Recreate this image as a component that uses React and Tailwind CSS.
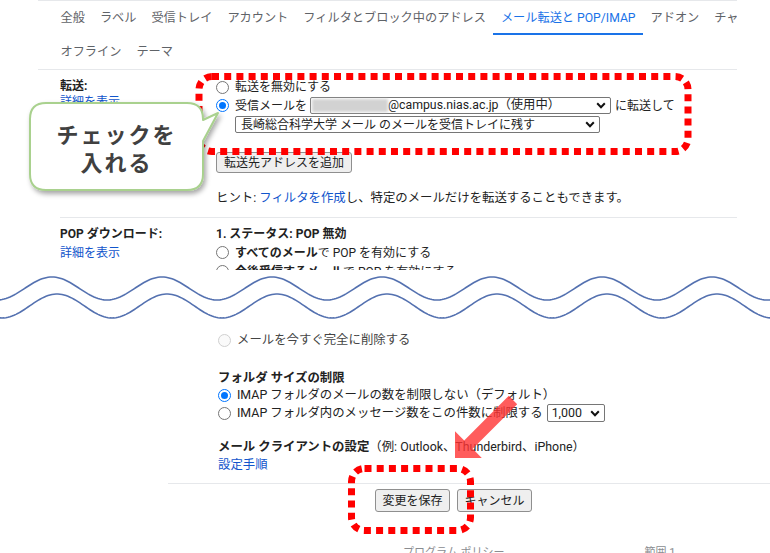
import React from "react";

const Radio = ({ checked, disabled }) => {
  if (checked) {
    return (
      <span className="w-[13px] h-[13px] shrink-0 rounded-full border-[1.5px] border-[#0075ff] bg-white flex items-center justify-center">
        <span className="w-[7px] h-[7px] rounded-full bg-[#0075ff]" />
      </span>
    );
  }
  return (
    <span
      className={
        disabled
          ? "w-[13px] h-[13px] shrink-0 rounded-full border border-[#d0d0d0] bg-[#fafafa]"
          : "w-[13px] h-[13px] shrink-0 rounded-full border border-[#767676] bg-white"
      }
    />
  );
};

const Chevron = () => (
  <svg width="10" height="7" viewBox="0 0 10 7" className="shrink-0">
    <path d="M1.2 1.3 L5 5.2 L8.8 1.3" fill="none" stroke="#111" strokeWidth="2" />
  </svg>
);

const wave = (cy, amp, phase) => {
  let d = "";
  for (let x = -4; x <= 774; x += 2) {
    const y = cy - amp * Math.cos((2 * Math.PI * (x - phase)) / 110);
    d += (x === -4 ? "M" : "L") + x + " " + y.toFixed(2) + " ";
  }
  return d;
};

const tabs = [
  "全般",
  "ラベル",
  "受信トレイ",
  "アカウント",
  "フィルタとブロック中のアドレス",
  "メール転送と POP/IMAP",
  "アドオン",
  "チャットと Meet",
];

export default function App() {
  const upper = wave(26.5, 11.5, 52);
  const lower = wave(44, 12, 57);

  return (
    <div className="relative w-[770px] h-[553px] overflow-hidden bg-white text-[#222] text-[12px] font-[family-name:Roboto,'Noto_Sans_CJK_JP',sans-serif]">
      {/* tabs */}
      <div className="ml-[38px] w-[699px] border-y border-[#e6e8eb] text-[12.2px] text-[#5f6368]">
        <div className="h-[34px] flex pl-[15px] overflow-hidden whitespace-nowrap">
          {tabs.map((t, i) => (
            <div
              key={t}
              className={
                i === 5
                  ? "relative shrink-0 px-[7.5px] flex items-center text-[#1a73e8]"
                  : "relative shrink-0 px-[7.5px] flex items-center"
              }
            >
              {t}
              {i === 5 && (
                <span className="absolute left-0 right-0 bottom-0 h-[2.5px] bg-[#1a73e8]" />
              )}
            </div>
          ))}
        </div>
        <div className="h-[34px] flex pl-[15px] whitespace-nowrap">
          <div className="px-[7.5px] flex items-center">オフライン</div>
          <div className="px-[7.5px] flex items-center">テーマ</div>
        </div>
      </div>

      {/* 転送 */}
      <div className="ml-[60px] w-[677px] h-[148px] border-b border-[#e6e8eb] flex">
        <div className="w-[156px] pt-[8px] leading-[16px]">
          <div className="font-bold">転送:</div>
          <div className="text-[#1155cc]">詳細を表示</div>
        </div>
        <div className="flex-1 pt-[8px]">
          <div className="h-[18px] flex items-center">
            <Radio />
            <span className="ml-[6px]">転送を無効にする</span>
          </div>
          <div className="h-[19px] flex items-center whitespace-nowrap">
            <Radio checked />
            <span className="ml-[6px]">受信メールを</span>
            <div className="ml-[3px] w-[301px] h-[17px] border border-[#767676] rounded-[2px] bg-white flex items-center pr-[4px] text-[12.3px]">
              <div className="ml-[1px] w-[76px] h-[13px] bg-[#d2d2d2] blur-[1.5px]" />
              <span>@campus.nias.ac.jp（使用中）</span>
              <span className="ml-auto">
                <Chevron />
              </span>
            </div>
            <span className="ml-[4px]">に転送して</span>
          </div>
          <div className="mt-[1px] pl-[19px]">
            <div className="w-[365px] h-[17px] border border-[#767676] rounded-[2px] bg-white flex items-center pl-[5px] pr-[4px] text-[12px] whitespace-nowrap">
              <span>長崎総合科学大学 メール のメールを受信トレイに残す</span>
              <span className="ml-auto">
                <Chevron />
              </span>
            </div>
          </div>
          <div className="mt-[19px] h-[21px] w-[136px] border border-[#8f8f8f] rounded-[3px] bg-[#efefef] flex items-center justify-center">
            転送先アドレスを追加
          </div>
          <div className="mt-[17px] h-[16px] flex items-center whitespace-nowrap text-[12.4px]">
            ヒント:&nbsp;<span className="text-[#1155cc]">フィルタを作成</span>し、特定のメールだけを転送することもできます。
          </div>
        </div>
      </div>

      {/* POP */}
      <div className="ml-[60px] w-[677px] h-[52px] overflow-hidden flex pt-[6px]">
        <div className="w-[156px]">
          <div className="h-[19px] flex items-center font-bold">POP ダウンロード:</div>
          <div className="h-[19px] flex items-center text-[#1155cc]">詳細を表示</div>
        </div>
        <div className="flex-1">
          <div className="h-[19px] flex items-center font-bold">1. ステータス: POP 無効</div>
          <div className="h-[19px] flex items-center">
            <Radio />
            <span className="ml-[6px]">
              <b>すべてのメール</b>で POP を有効にする
            </span>
          </div>
          <div className="h-[19px] flex items-center">
            <Radio />
            <span className="ml-[6px]">
              <b>今後受信するメール</b>で POP を有効にする
            </span>
          </div>
        </div>
      </div>

      {/* IMAP bottom */}
      <div className="mt-[61px] pl-[218px] text-[12.4px] whitespace-nowrap">
        <div className="h-[18px] flex items-center">
          <Radio disabled />
          <span className="ml-[6px] text-[#444]">メールを今すぐ完全に削除する</span>
        </div>
        <div className="mt-[20px] h-[18px] flex items-center font-bold">フォルダ サイズの制限</div>
        <div className="h-[17px] flex items-center">
          <Radio checked />
          <span className="ml-[6px]">IMAP フォルダのメールの数を制限しない（デフォルト）</span>
        </div>
        <div className="h-[18px] flex items-center">
          <Radio />
          <span className="ml-[6px]">IMAP フォルダ内のメッセージ数をこの件数に制限する</span>
          <div className="ml-[4px] w-[58px] h-[18px] border border-[#767676] rounded-[2px] bg-white flex items-center pl-[4px] pr-[4px]">
            <span>1,000</span>
            <span className="ml-auto">
              <Chevron />
            </span>
          </div>
        </div>
        <div className="mt-[16px] h-[18px] flex items-center">
          <b>メール クライアントの設定</b>
          <span>（例: Outlook、Thunderbird、iPhone）</span>
        </div>
        <div className="h-[18px] flex items-center text-[#1155cc]">設定手順</div>
      </div>
      <div className="mt-[9px] ml-[168px] border-t border-[#e6e8eb]" />
      <div className="pt-[5px] pl-[375px] flex gap-[7px]">
        <div className="h-[23px] w-[75px] border border-[#8f8f8f] rounded-[3px] bg-[#efefef] flex items-center justify-center">
          変更を保存
        </div>
        <div className="h-[23px] w-[75px] border border-[#8f8f8f] rounded-[3px] bg-[#efefef] flex items-center justify-center">
          キャンセル
        </div>
      </div>
      <div className="mt-[33px] flex text-[11px] text-[#8a8d91] whitespace-nowrap">
        <span className="ml-[403px]">プログラム ポリシー</span>
        <span className="ml-[140px]">範囲 1</span>
      </div>

      {/* wave break */}
      <svg className="absolute left-0 top-[262px] overflow-visible" width="770" height="70">
        <path d={upper + " L774 68 L-4 68 Z"} fill="#fff" />
        <path d={upper} fill="none" stroke="#5471b0" strokeWidth="1.6" />
        <path d={lower} fill="none" stroke="#5471b0" strokeWidth="1.6" />
      </svg>

      {/* annotations */}
      <svg className="absolute left-0 top-0 pointer-events-none" width="770" height="553">
        <rect x="199" y="76.5" width="489" height="75" rx="13" fill="none" stroke="#ff0000" strokeWidth="7" strokeDasharray="7 5.2" />
        <rect x="351.5" y="468.5" width="119" height="62" rx="13" fill="none" stroke="#ff0000" strokeWidth="7" strokeDasharray="7 5.2" />
        <polygon
          points="508.8,395.8 517.2,404.2 472.7,448.8 481.8,458 455,458 455,431.2 464.2,440.4"
          fill="#ff3333"
          opacity="0.8"
        />
        <defs>
          <filter id="sh" x="-20%" y="-20%" width="140%" height="150%">
            <feDropShadow dx="2" dy="3" stdDeviation="2.5" floodColor="#000" floodOpacity="0.35" />
          </filter>
        </defs>
        <path
          d="M46 103 H187 Q203 103 203 119 V120 L218 113 L203 141 V174 Q203 190 187 190 H46 Q30 190 30 174 V119 Q30 103 46 103 Z"
          fill="#ffffff"
          stroke="#a9d18e"
          strokeWidth="2"
          strokeLinejoin="round"
          filter="url(#sh)"
        />
      </svg>
      <div className="absolute left-[30px] top-[104px] w-[173px] h-[86px] flex flex-col items-center justify-center text-[22px] leading-[28px] font-bold tracking-[2px] text-[#404040] font-[family-name:'Noto_Sans_CJK_JP',sans-serif]">
        <div>チェックを</div>
        <div>入れる</div>
      </div>
    </div>
  );
}
